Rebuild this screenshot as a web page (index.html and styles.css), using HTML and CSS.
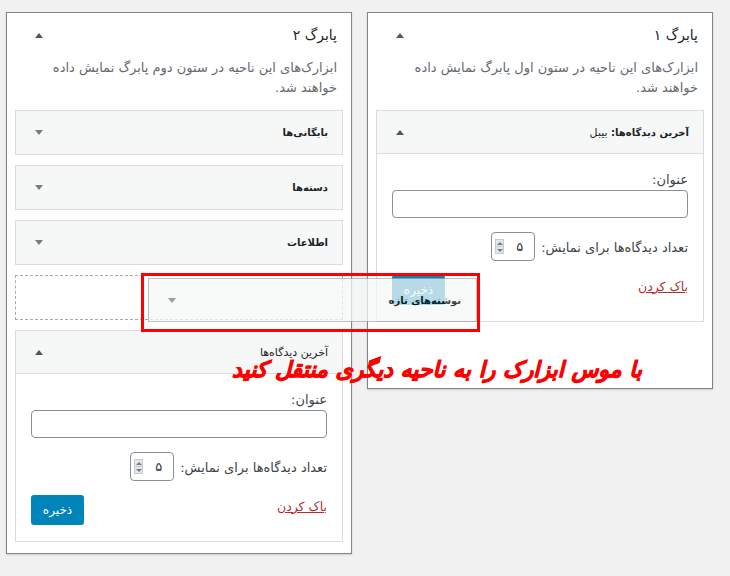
FILE: index.html
```html
<!DOCTYPE html>
<html lang="fa" dir="rtl">
<head>
<meta charset="utf-8">
<title>ابزارک‌ها</title>
<link rel="stylesheet" href="styles.css">
</head>
<body>
<div class="screen">
  <div class="sidebars">
    <section class="sidebar">
      <div class="sidebar-head">
        <h2 class="sidebar-title">پابرگ ۱</h2>
        <span class="tri tri-up"></span>
      </div>
      <p class="desc">ابزارک‌های این ناحیه در ستون اول پابرگ نمایش داده<br>خواهند شد.</p>
      <div class="list list-tall">
        <div class="widget">
          <div class="w-head">
            <span class="w-title">آخرین دیدگاه‌ها: <span class="w-sub">بیبل</span></span>
            <span class="tri tri-up"></span>
          </div>
          <div class="w-body">
            <p class="field-label">عنوان:</p>
            <div class="text-input"></div>
            <div class="num-row">
              <span class="field-label">تعداد دیدگاه‌ها برای نمایش:</span>
              <div class="num-input"><span class="num-val">۵</span><span class="spin"><span class="spin-up"></span><span class="spin-down"></span></span></div>
            </div>
            <div class="controls">
              <a class="delete-link">باک کردن</a>
              <span class="save-btn">ذخیره</span>
            </div>
          </div>
        </div>
      </div>
    </section>

    <section class="sidebar">
      <div class="sidebar-head">
        <h2 class="sidebar-title">پابرگ ۲</h2>
        <span class="tri tri-up"></span>
      </div>
      <p class="desc">ابزارک‌های این ناحیه در ستون دوم پابرگ نمایش داده<br>خواهند شد.</p>
      <div class="list">
        <div class="widget widget-closed">
          <div class="w-head"><span class="w-title">بایگانی‌ها</span><span class="tri tri-down"></span></div>
        </div>
        <div class="widget widget-closed">
          <div class="w-head"><span class="w-title">دسته‌ها</span><span class="tri tri-down"></span></div>
        </div>
        <div class="widget widget-closed">
          <div class="w-head"><span class="w-title">اطلاعات</span><span class="tri tri-down"></span></div>
        </div>
        <div class="placeholder"></div>
        <div class="widget">
          <div class="w-head">
            <span class="w-title w-title-light">آخرین دیدگاه‌ها</span>
            <span class="tri tri-up"></span>
          </div>
          <div class="w-body">
            <p class="field-label">عنوان:</p>
            <div class="text-input"></div>
            <div class="num-row">
              <span class="field-label">تعداد دیدگاه‌ها برای نمایش:</span>
              <div class="num-input"><span class="num-val">۵</span><span class="spin"><span class="spin-up"></span><span class="spin-down"></span></span></div>
            </div>
            <div class="controls">
              <a class="delete-link">باک کردن</a>
              <span class="save-btn">ذخیره</span>
            </div>
          </div>
        </div>
      </div>
    </section>
  </div>

  <div class="drag-item">
    <span class="w-title">نوشته‌های تازه</span>
    <span class="tri tri-down"></span>
  </div>
  <div class="highlight"></div>
  <p class="hint">با موس ابزارک را به ناحیه دیگری منتقل کنید</p>
</div>
</body>
</html>
```

FILE: styles.css
```css
* { box-sizing: border-box; }

html, body {
  margin: 0;
  padding: 0;
  background: #f1f1f1;
}

body {
  font-family: "DejaVu Sans", "Noto Sans", sans-serif;
  font-size: 13px;
  color: #3c434a;
  width: 730px;
  height: 576px;
  overflow: hidden;
}

.screen {
  position: relative;
  width: 730px;
  height: 576px;
}

.sidebars {
  display: flex;
  align-items: flex-start;
  gap: 15px;
  padding: 12px 17px 0 6px;
}

.sidebar {
  width: 346px;
  background: #fff;
  border: 1px solid #82868b;
  box-shadow: 0 1px 2px rgba(0, 0, 0, 0.15);
  padding: 0 8px 1px;
}

.sidebar-head {
  display: flex;
  justify-content: space-between;
  align-items: center;
  height: 20px;
  margin-top: 12px;
  padding: 0 6px 0 20px;
}

.sidebar-title {
  margin: 0;
  font-size: 14px;
  line-height: 20px;
  font-weight: normal;
  color: #1d2327;
}

.desc {
  margin: 13px 6px 12px 6px;
  font-size: 13px;
  line-height: 20px;
  color: #646970;
}

.list {
  padding-bottom: 0;
}

.list-tall {
  padding-bottom: 55px;
}

.tri {
  display: block;
  width: 0;
  height: 0;
  border-left: 4px solid transparent;
  border-right: 4px solid transparent;
}

.tri-up {
  border-bottom: 5px solid #50575e;
}

.tri-down {
  border-top: 5px solid #787c82;
}

.widget {
  background: #fff;
  border: 1px solid #dcdcde;
  margin-bottom: 10px;
}

.w-head {
  display: flex;
  justify-content: space-between;
  align-items: center;
  height: 43px;
  padding: 0 14px 0 19px;
  background: #f6f7f7;
  border-bottom: 1px solid #dcdcde;
}

.widget-closed .w-head {
  border-bottom: none;
}

.w-title {
  font-size: 10px;
  font-weight: bold;
  color: #1d2327;
}

.w-title-light {
  font-weight: normal;
  font-size: 11px;
  color: #1d2327;
}

.w-sub {
  font-weight: normal;
  font-size: 11px;
}

.w-body {
  padding: 16px 15px 16px;
}

.field-label {
  margin: 0 0 2px;
  font-size: 13px;
  line-height: 18px;
  color: #3c434a;
  position: relative;
  top: 1px;
}

.text-input {
  height: 28px;
  border: 1px solid #8c8f94;
  border-radius: 4px;
  background: #fff;
}

.num-row {
  display: flex;
  align-items: center;
  gap: 6px;
  margin-top: 14px;
  height: 29px;
}

.num-row .field-label {
  margin: 0;
}

.num-input {
  display: flex;
  align-items: center;
  justify-content: space-between;
  width: 44px;
  height: 29px;
  border: 1px solid #8c8f94;
  border-radius: 4px;
  background: #fff;
  padding: 0 11px 0 3px;
}

.num-val {
  font-size: 13px;
  color: #2c3338;
}

.spin {
  display: flex;
  flex-direction: column;
  width: 9px;
  height: 15px;
  background: #e6e7e8;
  border: 1px solid #c9cbcd;
}

.spin-up, .spin-down {
  flex: 1;
  display: flex;
  align-items: center;
  justify-content: center;
}

.spin-up { border-bottom: 1px solid #c9cbcd; }

.spin-up::before {
  content: "";
  border-left: 3px solid transparent;
  border-right: 3px solid transparent;
  border-bottom: 3px solid #6c7a99;
}

.spin-down::before {
  content: "";
  border-left: 3px solid transparent;
  border-right: 3px solid transparent;
  border-top: 3px solid #6c7a99;
}

.controls {
  display: flex;
  justify-content: space-between;
  align-items: center;
  margin-top: 14px;
  height: 30px;
}

.delete-link {
  color: #b32d2e;
  text-decoration: underline;
  font-size: 12.5px;
  line-height: 18px;
  margin-top: -7px;
}

.save-btn {
  display: flex;
  align-items: center;
  justify-content: center;
  width: 53px;
  height: 30px;
  background: #0085ba;
  border-radius: 3px;
  color: #fff;
  font-size: 12px;
}

.placeholder {
  height: 45px;
  border: 1px dashed #a7aaad;
  margin-bottom: 10px;
}

.drag-item {
  position: absolute;
  left: 148px;
  top: 278px;
  width: 329px;
  height: 44px;
  display: flex;
  justify-content: space-between;
  align-items: center;
  padding: 0 15px 0 19px;
  background: #f6f7f7;
  border: 1px solid #a7aaad;
  opacity: 0.75;
}

.drag-item .w-title {
  color: #000;
}

.highlight {
  position: absolute;
  left: 141px;
  top: 273px;
  width: 339px;
  height: 59px;
  border: 3px solid #ff0000;
}

.hint {
  position: absolute;
  right: 88px;
  top: 354px;
  margin: 0;
  font-size: 22px;
  line-height: 32px;
  font-weight: bold;
  font-style: italic;
  color: #ff0000;
  -webkit-text-stroke: 0.8px #ff0000;
  white-space: nowrap;
}
```
